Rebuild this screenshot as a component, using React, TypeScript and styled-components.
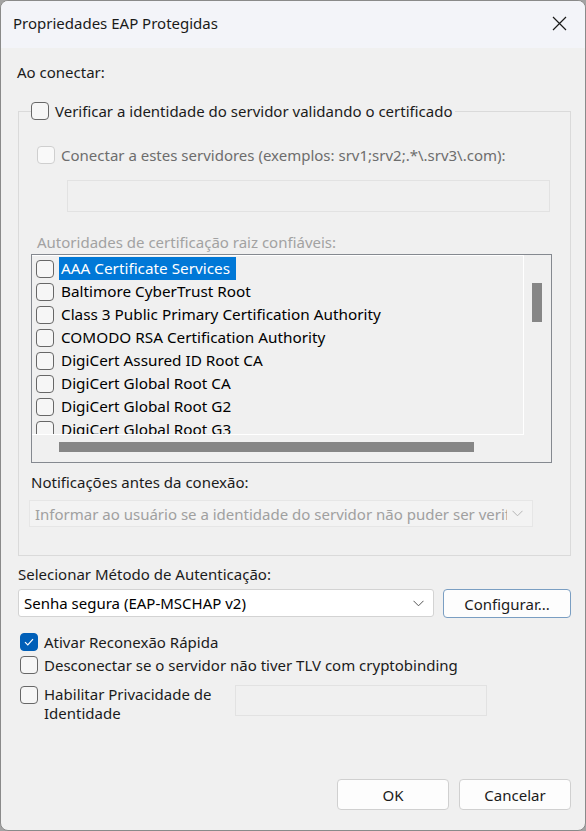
import React from "react";
import styled, { createGlobalStyle } from "styled-components";

const GlobalStyle = createGlobalStyle`
  html, body {
    margin: 0;
    padding: 0;
    background: #a3a3a3;
  }
  * {
    box-sizing: border-box;
  }
`;

const FONT = `"Noto Sans", "Open Sans", "Liberation Sans", sans-serif`;

const Window = styled.div`
  width: 586px;
  height: 831px;
  border: 1px solid #8a8a8a;
  border-radius: 8px;
  overflow: hidden;
  background: #f0f0f0;
  display: flex;
  flex-direction: column;
  font-family: ${FONT};
  font-size: 15px;
  color: #1b1b1b;
`;

const TitleBar = styled.div`
  height: 47px;
  flex: none;
  background: #f3f4f9;
  display: flex;
  align-items: center;
  justify-content: space-between;
  padding: 0 18px 3px 12px;
`;

const Title = styled.span`
  font-size: 15px;
  color: #1a1a1a;
`;

const CloseButton = styled.button`
  border: none;
  background: transparent;
  padding: 0;
  width: 16px;
  height: 16px;
  display: flex;
  align-items: center;
  justify-content: center;
  cursor: default;
`;

const Body = styled.div`
  flex: 1;
  display: flex;
  flex-direction: column;
  padding: 0 14px 20px 16px;
`;

const Label = styled.div<{ $tone?: "normal" | "dim" | "faint"; $mt?: number; $ml?: number }>`
  line-height: 20px;
  height: 20px;
  white-space: nowrap;
  margin-top: ${(p) => p.$mt ?? 0}px;
  margin-left: ${(p) => p.$ml ?? 0}px;
  color: ${(p) => (p.$tone === "dim" ? "#6d6d6d" : p.$tone === "faint" ? "#a2a2a2" : "#1b1b1b")};
`;

const Group = styled.fieldset`
  margin: 19px 0 0 1px;
  padding: 0 18px 28px 12px;
  border: 1px solid #dadada;
  border-radius: 0;
  min-width: 0;
  display: flex;
  flex-direction: column;
`;

const Legend = styled.legend`
  margin-left: 0;
  padding: 0 2px 0 0;
  height: 20px;
`;

const CheckRow = styled.label<{ $gap?: number; $mt?: number; $ml?: number }>`
  display: flex;
  align-items: flex-start;
  gap: ${(p) => p.$gap ?? 6}px;
  margin-top: ${(p) => p.$mt ?? 0}px;
  margin-left: ${(p) => p.$ml ?? 0}px;
  line-height: 20px;
`;

const Box = styled.span<{ $state?: "off" | "on" | "disabled" }>`
  flex: none;
  width: 18px;
  height: 18px;
  margin-top: 1px;
  border-radius: 4px;
  display: flex;
  align-items: center;
  justify-content: center;
  border: 1px solid
    ${(p) => (p.$state === "on" ? "#005fb8" : p.$state === "disabled" ? "#cfcfcf" : "#676767")};
  background: ${(p) => (p.$state === "on" ? "#005fb8" : p.$state === "disabled" ? "#f9f9f9" : "#f6f6f6")};
`;

const CheckText = styled.span<{ $tone?: "normal" | "dim" }>`
  color: ${(p) => (p.$tone === "dim" ? "#6d6d6d" : "#1b1b1b")};
  white-space: nowrap;
`;

const WrapText = styled.span`
  width: 180px;
  line-height: 19px;
`;

const FlatInput = styled.div<{ $w: number; $h: number; $mt?: number; $ml?: number }>`
  width: ${(p) => p.$w}px;
  height: ${(p) => p.$h}px;
  margin-top: ${(p) => p.$mt ?? 0}px;
  margin-left: ${(p) => p.$ml ?? 0}px;
  border: 1px solid #e2e2e2;
  background: #f0f0f0;
  flex: none;
`;

const ListBox = styled.div`
  margin-top: 2px;
  width: 521px;
  height: 209px;
  border: 1px solid #858990;
  display: grid;
  grid-template-columns: 1fr 27px;
  grid-template-rows: 1fr 27px;
  background: #f0f0f0;
`;

const ListContent = styled.div`
  border: 1px solid #ffffff;
  border-left: none;
  overflow: hidden;
  padding-top: 1px;
`;

const ListItem = styled.div`
  height: 23px;
  display: flex;
  align-items: center;
  padding-left: 4px;
  gap: 5px;
  font-size: 15.3px;
  color: #000;
  white-space: nowrap;
`;

const ItemText = styled.span<{ $selected?: boolean }>`
  padding: 0 6px 0 2px;
  line-height: 23px;
  background: ${(p) => (p.$selected ? "#0078d7" : "transparent")};
  color: ${(p) => (p.$selected ? "#fff" : "#000")};
`;

const VTrack = styled.div`
  padding: 28px 0 0 8px;
`;

const VThumb = styled.div`
  width: 10px;
  height: 39px;
  background: #868686;
`;

const HTrack = styled.div`
  padding: 7px 0 0 27px;
`;

const HThumb = styled.div`
  width: 415px;
  height: 10px;
  background: #868686;
`;

const Corner = styled.div``;

const Combo = styled.div<{ $disabled?: boolean; $w: number; $h: number; $mt?: number; $ml?: number }>`
  width: ${(p) => p.$w}px;
  height: ${(p) => p.$h}px;
  margin-top: ${(p) => p.$mt ?? 0}px;
  margin-left: ${(p) => p.$ml ?? 0}px;
  flex: none;
  display: flex;
  align-items: center;
  justify-content: space-between;
  gap: 5px;
  padding: 0 9px 0 5px;
  border: 1px solid ${(p) => (p.$disabled ? "#e6e6e6" : "#d3d3d3")};
  border-radius: ${(p) => (p.$disabled ? 0 : 3)}px;
  background: ${(p) => (p.$disabled ? "#f3f3f3" : "#ffffff")};
  color: ${(p) => (p.$disabled ? "#a0a0a0" : "#000")};
  overflow: hidden;
`;

const ComboText = styled.span`
  white-space: nowrap;
  overflow: hidden;
`;

const Row = styled.div<{ $mt?: number; $gap?: number }>`
  display: flex;
  align-items: flex-start;
  gap: ${(p) => p.$gap ?? 10}px;
  margin-top: ${(p) => p.$mt ?? 0}px;
`;

const Button = styled.button<{ $accent?: boolean; $w: number; $h: number }>`
  width: ${(p) => p.$w}px;
  height: ${(p) => p.$h}px;
  flex: none;
  font-family: ${FONT};
  font-size: 15px;
  color: #1b1b1b;
  background: #fdfdfd;
  border: 1px solid ${(p) => (p.$accent ? "#7a9ec2" : "#d0d0d0")};
  border-radius: 4px;
  padding: 0;
`;

const Footer = styled.div`
  margin-top: auto;
  display: flex;
  justify-content: flex-end;
  gap: 10px;
`;

const Chevron = ({ color }: { color: string }) => (
  <svg width="11" height="7" viewBox="0 0 11 7" style={{ flex: "none" }}>
    <path d="M0.5 0.8 L5.5 5.8 L10.5 0.8" fill="none" stroke={color} strokeWidth="1" />
  </svg>
);

const CheckMark = () => (
  <svg width="12" height="10" viewBox="0 0 12 10">
    <path d="M2 5.2 L4.8 8 L10 2.2" fill="none" stroke="#fff" strokeWidth="1.2" />
  </svg>
);

const certificates = [
  "AAA Certificate Services",
  "Baltimore CyberTrust Root",
  "Class 3 Public Primary Certification Authority",
  "COMODO RSA Certification Authority",
  "DigiCert Assured ID Root CA",
  "DigiCert Global Root CA",
  "DigiCert Global Root G2",
  "DigiCert Global Root G3",
];

export default function App() {
  return (
    <>
      <GlobalStyle />
      <Window>
        <TitleBar>
          <Title>Propriedades EAP Protegidas</Title>
          <CloseButton aria-label="Fechar">
            <svg width="15" height="15" viewBox="0 0 15 15">
              <path d="M1 1 L14 14 M14 1 L1 14" stroke="#1a1a1a" strokeWidth="1.2" />
            </svg>
          </CloseButton>
        </TitleBar>
        <Body>
          <Label $mt={14}>Ao conectar:</Label>
          <Group>
            <Legend>
              <CheckRow>
                <Box $state="off" />
                <CheckText>Verificar a identidade do servidor validando o certificado</CheckText>
              </CheckRow>
            </Legend>
            <CheckRow $mt={24} $ml={6}>
              <Box $state="disabled" />
              <CheckText $tone="dim">
                Conectar a estes servidores (exemplos: srv1;srv2;.*\.srv3\.com):
              </CheckText>
            </CheckRow>
            <FlatInput $w={483} $h={32} $mt={15} $ml={36} />
            <Label $tone="faint" $mt={20} $ml={6}>
              Autoridades de certificação raiz confiáveis:
            </Label>
            <ListBox>
              <ListContent>
                {certificates.map((c, i) => (
                  <ListItem key={c}>
                    <Box $state="off" />
                    <ItemText $selected={i === 0}>{c}</ItemText>
                  </ListItem>
                ))}
              </ListContent>
              <VTrack>
                <VThumb />
              </VTrack>
              <HTrack>
                <HThumb />
              </HTrack>
              <Corner />
            </ListBox>
            <Label $mt={9}>Notificações antes da conexão:</Label>
            <Combo $disabled $w={504} $h={27} $mt={8} $ml={-2}>
              <ComboText>Informar ao usuário se a identidade do servidor não puder ser verificada</ComboText>
              <Chevron color="#b5b5b5" />
            </Combo>
          </Group>
          <Label $mt={8} $ml={1}>Selecionar Método de Autenticação:</Label>
          <Row $mt={5} $gap={9}>
            <Combo $w={416} $h={28} $ml={1}>
              <ComboText>Senha segura (EAP-MSCHAP v2)</ComboText>
              <Chevron color="#555" />
            </Combo>
            <Button $accent $w={128} $h={29}>
              Configurar...
            </Button>
          </Row>
          <CheckRow $mt={14} $ml={3}>
            <Box $state="on">
              <CheckMark />
            </Box>
            <CheckText>Ativar Reconexão Rápida</CheckText>
          </CheckRow>
          <CheckRow $mt={3} $ml={3}>
            <Box $state="off" />
            <CheckText>Desconectar se o servidor não tiver TLV com cryptobinding</CheckText>
          </CheckRow>
          <Row $mt={10}>
            <CheckRow $ml={3}>
              <Box $state="off" />
              <WrapText>Habilitar Privacidade de Identidade</WrapText>
            </CheckRow>
            <FlatInput $w={252} $h={31} $ml={1} />
          </Row>
          <Footer>
            <Button $w={112} $h={31}>OK</Button>
            <Button $w={112} $h={31}>Cancelar</Button>
          </Footer>
        </Body>
      </Window>
    </>
  );
}
